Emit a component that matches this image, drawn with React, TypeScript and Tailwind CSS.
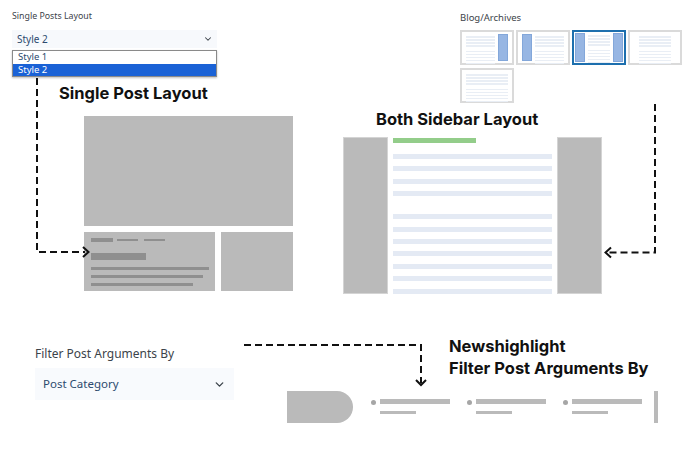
import React from 'react'
import { ChevronDown } from 'lucide-react'

type ThumbKind = 'right' | 'left' | 'both' | 'narrow' | 'full'

const blogThumbs: { kind: ThumbKind; active?: boolean }[] = [
  { kind: 'right' },
  { kind: 'left' },
  { kind: 'both', active: true },
  { kind: 'narrow' },
  { kind: 'full' },
]

function ThumbLines() {
  return (
    <div className="flex flex-col flex-1 min-w-0">
      <div className="h-[2px] w-[20px] bg-[#a6d89e]" />
      <div className="mt-[2px] flex flex-col gap-[1.5px]">
        <div className="h-[1.5px] bg-[#e9eef5]" />
        <div className="h-[1.5px] bg-[#e9eef5]" />
        <div className="h-[1.5px] bg-[#e9eef5]" />
        <div className="h-[1.5px] bg-[#e9eef5]" />
      </div>
      <div className="mt-[4px] flex flex-col gap-[1.5px]">
        <div className="h-[1.5px] bg-[#e9eef5]" />
        <div className="h-[1.5px] bg-[#e9eef5]" />
        <div className="h-[1.5px] bg-[#e9eef5]" />
        <div className="h-[1.5px] bg-[#e9eef5]" />
        <div className="h-[1.5px] bg-[#e9eef5]" />
      </div>
    </div>
  )
}

function Thumb({ kind, active }: { kind: ThumbKind; active?: boolean }) {
  const side = <div className="w-[10px] shrink-0 bg-[#97b6e3] border border-[#83a7da]" />
  return (
    <div
      className={
        'w-[54px] h-[35px] border-2 bg-white ' +
        (active ? 'border-[#1d6fae]' : 'border-[#dadada]')
      }
    >
      <div
        className={
          'flex h-full gap-[3px] ' +
          (kind === 'narrow' ? 'px-[9px] py-[2px]' : kind === 'both' ? 'p-[1px]' : 'px-[4px] py-[2px]')
        }
      >
        {(kind === 'left' || kind === 'both') && side}
        <ThumbLines />
        {(kind === 'right' || kind === 'both') && side}
      </div>
    </div>
  )
}

function Connectors() {
  return (
    <svg
      className="absolute inset-0 pointer-events-none"
      width="693"
      height="454"
      viewBox="0 0 693 454"
      fill="none"
    >
      <g stroke="#111" strokeWidth="2" strokeDasharray="7 4">
        <path d="M37 78 V252 H85" />
        <path d="M655 104 V252.5 H607" />
        <path d="M244 345 H421 V383" />
      </g>
      <g stroke="#111" strokeWidth="2" fill="none" strokeLinejoin="miter">
        <polyline points="83,247 88.5,252 83,257" />
        <polyline points="611,247.5 605.5,252.5 611,257.5" />
        <polyline points="416,380 421,385 426,380" />
      </g>
    </svg>
  )
}

export default function App() {
  return (
    <div className="relative w-[693px] h-[454px] overflow-hidden bg-white font-['Noto_Sans',sans-serif]">
      {/* top row */}
      <div className="flex h-[294px]">
        {/* single post settings */}
        <div className="w-[330px] shrink-0 pl-[12px] pt-[10px]">
          <div className="text-[8.8px] leading-[13px] text-[#3c434a]">Single Posts Layout</div>
          <div className="mt-[7px] w-[205px] h-[18px] bg-[#f7f9fc] flex items-center justify-between pl-[5px] pr-[4px] text-[10px] text-[#2c4a6e]">
            <span>Style 2</span>
            <ChevronDown className="w-[10px] h-[10px] text-[#3c434a]" strokeWidth={2.5} />
          </div>
          <div className="mt-[2px] w-[205px] border border-[#8a8a8a] shadow-[0_1px_2px_rgba(0,0,0,0.25)] text-[9.5px] leading-[12.5px]">
            <div className="px-[5px] text-[#2c4a6e] bg-white">Style 1</div>
            <div className="px-[5px] text-white bg-[#1a62d6]">Style 2</div>
          </div>
          <div className="mt-[6px] ml-[47px] font-['Inter',sans-serif] font-bold text-[16.5px] leading-[20px] text-[#111]">
            Single Post Layout
          </div>
          <div className="mt-[13px] ml-[72px] w-[209px]">
            <div className="h-[110px] bg-[#bababa]" />
            <div className="mt-[6px] flex gap-[6px]">
              <div className="w-[131px] h-[59px] bg-[#bababa] pl-[7px] pt-[6px]">
                <div className="flex items-center">
                  <div className="w-[22px] h-[4px] bg-[#8f8f8f]" />
                  <div className="ml-[4px] w-[21px] h-[2px] bg-[#8f8f8f]" />
                  <div className="ml-[6px] w-[21px] h-[2px] bg-[#8f8f8f]" />
                </div>
                <div className="mt-[11px] w-[55px] h-[7px] bg-[#8f8f8f]" />
                <div className="mt-[7px] flex flex-col gap-[5px]">
                  <div className="w-[118px] h-[3px] bg-[#8f8f8f]" />
                  <div className="w-[112px] h-[3px] bg-[#8f8f8f]" />
                  <div className="w-[102px] h-[3px] bg-[#8f8f8f]" />
                </div>
              </div>
              <div className="w-[72px] h-[59px] bg-[#bababa]" />
            </div>
          </div>
        </div>

        {/* blog / archives */}
        <div className="flex-1">
          <div className="ml-[130px] pt-[11px]">
            <div className="text-[9.5px] leading-[13px] text-[#3c434a]">Blog/Archives</div>
            <div className="mt-[6px] grid grid-cols-[repeat(4,54px)] gap-x-[2px] gap-y-[3px]">
              {blogThumbs.map((t, i) => (
                <Thumb key={i} kind={t.kind} active={t.active} />
              ))}
            </div>
          </div>
          <div className="mt-[6px] ml-[46px] font-['Inter',sans-serif] font-bold text-[16.5px] leading-[20px] text-[#111]">
            Both Sidebar Layout
          </div>
          <div className="mt-[8px] ml-[13px] flex h-[157px]">
            <div className="w-[45px] bg-[#bababa] border border-[#d4d4d4]" />
            <div className="w-[169px] px-[5px] pt-[1px]">
              <div className="w-[83px] h-[5px] bg-[#93cd8a]" />
              <div className="mt-[11px] flex flex-col gap-[7.4px]">
                {[0, 1, 2, 3].map((i) => (
                  <div key={i} className="h-[5px] bg-[#e4eaf4]" />
                ))}
              </div>
              <div className="mt-[18px] flex flex-col gap-[7.4px]">
                {[0, 1, 2, 3, 4, 5, 6].map((i) => (
                  <div key={i} className="h-[5px] bg-[#e4eaf4]" />
                ))}
              </div>
            </div>
            <div className="w-[45px] bg-[#bababa] border border-[#d4d4d4]" />
          </div>
        </div>
      </div>

      {/* bottom row */}
      <div className="mt-[40px] flex">
        <div className="w-[244px] shrink-0 pl-[35px] pt-[12px]">
          <div className="text-[12px] leading-[16px] text-[#3c434a]">Filter Post Arguments By</div>
          <div className="mt-[6px] w-[199px] h-[32px] bg-[#f8fafd] flex items-center justify-between pl-[8px] pr-[8px] text-[11.5px] text-[#2c4a6e]">
            <span>Post Category</span>
            <ChevronDown className="w-[13px] h-[13px] text-[#3c434a]" strokeWidth={2.5} />
          </div>
        </div>
        <div className="flex-1">
          <div className="mt-[1px] ml-[205px] font-['Inter',sans-serif] font-bold text-[16.5px] leading-[22px] text-[#111]">
            <div>Newshighlight</div>
            <div>Filter Post Arguments By</div>
          </div>
          <div className="mt-[12px] ml-[43px] flex items-start h-[32px]">
            <div className="w-[66px] h-[32px] rounded-r-[16px] bg-[#bababa]" />
            <div className="ml-[17.5px] flex gap-[16.5px]">
              {[0, 1, 2].map((i) => (
                <div key={i} className="flex items-start pt-[8px] gap-[4.5px]">
                  <div className="mt-[0.5px] w-[5px] h-[5px] rounded-full bg-[#a6a6a6]" />
                  <div>
                    <div className="w-[70px] h-[5px] bg-[#bababa]" />
                    <div className="mt-[7px] w-[36px] h-[3px] bg-[#bababa]" />
                  </div>
                </div>
              ))}
            </div>
            <div className="ml-[12px] w-[4px] h-[32px] bg-[#bababa]" />
          </div>
        </div>
      </div>

      <Connectors />
    </div>
  )
}
